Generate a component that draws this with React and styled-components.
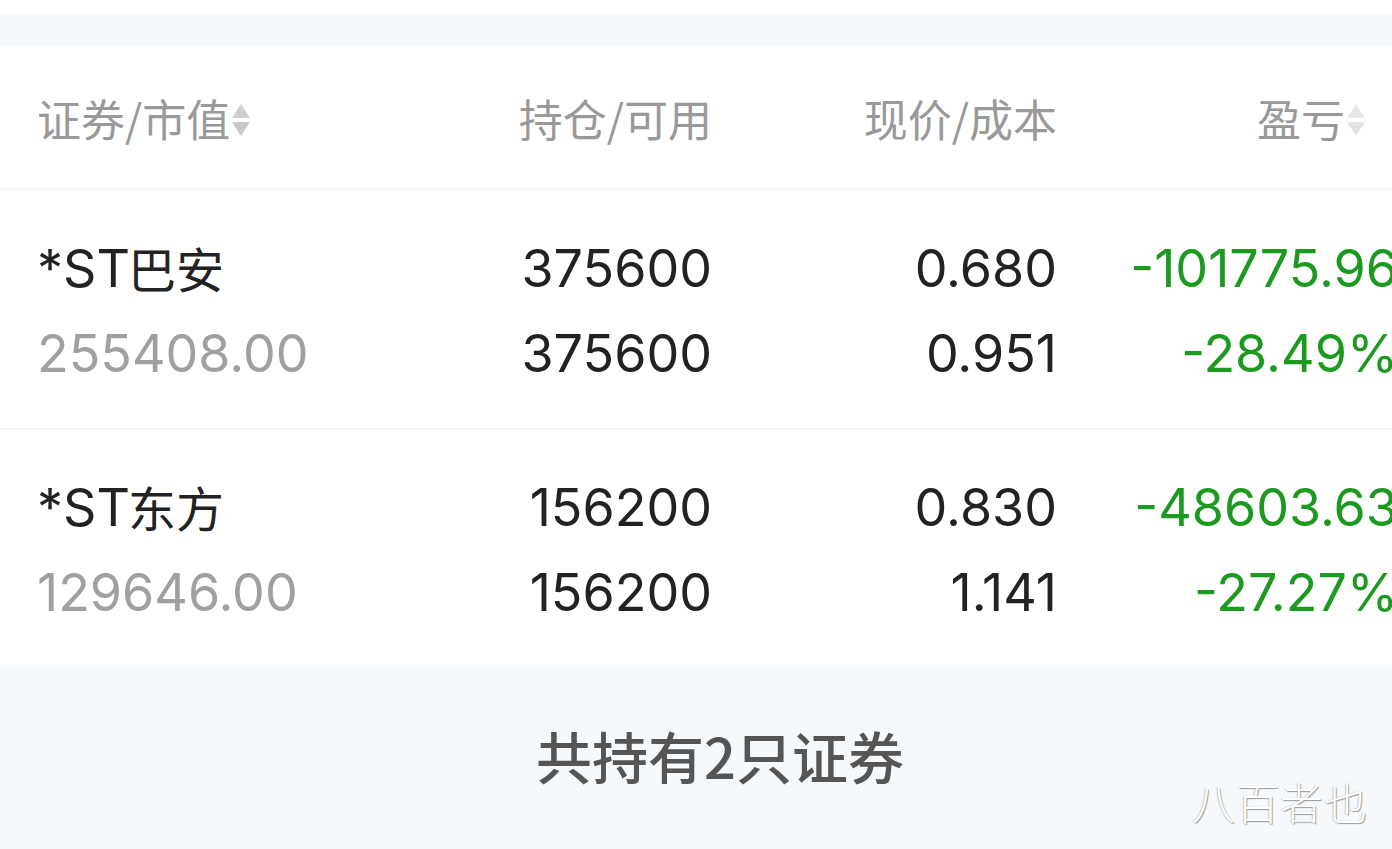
import React from "react";
import styled, { createGlobalStyle } from "styled-components";

const GlobalStyle = createGlobalStyle`
  html, body {
    margin: 0;
    padding: 0;
    background: #ffffff;
    overflow: hidden;
  }
  body {
    font-family: Inter, "Noto Sans CJK SC", sans-serif;
  }
`;

const Page = styled.div`
  width: 1440px;
  height: 849px;
  display: flex;
  flex-direction: column;
  background: #ffffff;
  position: relative;
`;

const TopGap = styled.div`
  height: 14px;
  background: #ffffff;
`;

const Band = styled.div`
  height: 32px;
  background: #f5f8fc;
`;

const Card = styled.div`
  background: #ffffff;
`;

const Grid = styled.div`
  display: grid;
  grid-template-columns: 363px 312px 345px 341px;
  padding-left: 37px;
`;

const HeaderRow = styled(Grid)`
  height: 143px;
  align-items: center;
  border-bottom: 1px solid #f0f0f0;
`;

const HeadCell = styled.div`
  display: flex;
  align-items: center;
  justify-content: ${(p) => (p.$right ? "flex-end" : "flex-start")};
  padding-right: ${(p) => p.$pad || 0}px;
  font-family: "Noto Sans CJK SC", sans-serif;
  font-size: 44px;
  color: #999999;
  line-height: 1;
`;

const Sort = styled.span`
  display: inline-flex;
  flex-direction: column;
  gap: 4px;
  margin-left: 2px;
  margin-top: 4px;
`;

const Arrow = styled.span`
  width: 0;
  height: 0;
  border-left: 9px solid transparent;
  border-right: 9px solid transparent;
  ${(p) =>
    p.$down
      ? `border-top: 14px solid ${p.$light ? "#e3e3e3" : "#c8c8c8"};`
      : `border-bottom: 14px solid ${p.$light ? "#e8e8e8" : "#cfcfcf"};`}
`;

const Row = styled(Grid)`
  padding-top: 36px;
  padding-bottom: 32px;
  border-bottom: ${(p) => (p.$last ? "none" : "1px solid #f0f0f0")};
`;

const Cell = styled.div`
  display: flex;
  flex-direction: column;
  align-items: ${(p) => (p.$right ? "flex-end" : "flex-start")};
  padding-right: ${(p) => p.$pad || 0}px;
  white-space: nowrap;
`;

const Line = styled.div`
  height: 85px;
  display: flex;
  align-items: center;
  font-family: Inter, "Noto Sans CJK SC", sans-serif;
  font-size: 52px;
  color: ${(p) => p.$color || "#222222"};
  line-height: 1;
`;

const NameCjk = styled.span`
  font-family: "Noto Sans CJK SC", sans-serif;
  font-size: 48px;
  margin-left: -2px;
  position: relative;
  top: -2px;
`;

const Footer = styled.div`
  flex: 1;
  background: #f6f9fc;
  display: flex;
  align-items: center;
  justify-content: center;
  padding-bottom: 8px;
  font-family: "Noto Sans CJK SC", sans-serif;
  font-size: 56px;
  font-weight: 500;
  color: #555555;
`;

const Watermark = styled.div`
  position: absolute;
  left: 1192px;
  top: 770px;
  font-family: "Noto Sans CJK SC", sans-serif;
  font-size: 43px;
  font-weight: 300;
  letter-spacing: 1px;
  color: #ffffff;
  text-shadow: 1px 1px 1px #9a9a9a, -1px 0 1px #c8c8c8;
`;

const holdings = [
  {
    prefix: "*ST",
    name: "巴安",
    value: "255408.00",
    qty: "375600",
    avail: "375600",
    price: "0.680",
    cost: "0.951",
    pl: "-101775.96",
    pct: "-28.49%",
  },
  {
    prefix: "*ST",
    name: "东方",
    value: "129646.00",
    qty: "156200",
    avail: "156200",
    price: "0.830",
    cost: "1.141",
    pl: "-48603.63",
    pct: "-27.27%",
  },
];

const SortIcon = ({ light }) => (
  <Sort>
    <Arrow $light={light} />
    <Arrow $down $light={light} />
  </Sort>
);

export default function App() {
  return (
    <>
      <GlobalStyle />
      <Page>
        <TopGap />
        <Band />
        <Card>
          <HeaderRow>
            <HeadCell>
              证券/市值
              <SortIcon />
            </HeadCell>
            <HeadCell $right>持仓/可用</HeadCell>
            <HeadCell $right>现价/成本</HeadCell>
            <HeadCell $right $pad={33}>
              盈亏
              <SortIcon light />
            </HeadCell>
          </HeaderRow>
          {holdings.map((h, i) => (
            <Row key={h.name} $last={i === holdings.length - 1}>
              <Cell>
                <Line>
                  {h.prefix}
                  <NameCjk>{h.name}</NameCjk>
                </Line>
                <Line $color="#a0a0a0">{h.value}</Line>
              </Cell>
              <Cell $right>
                <Line>{h.qty}</Line>
                <Line>{h.avail}</Line>
              </Cell>
              <Cell $right>
                <Line>{h.price}</Line>
                <Line>{h.cost}</Line>
              </Cell>
              <Cell $right $pad={0}>
                <Line $color="#1c9a20">{h.pl}</Line>
                <Line $color="#1c9a20">{h.pct}</Line>
              </Cell>
            </Row>
          ))}
        </Card>
        <Footer>共持有2只证券</Footer>
        <Watermark>八百者也</Watermark>
      </Page>
    </>
  );
}
